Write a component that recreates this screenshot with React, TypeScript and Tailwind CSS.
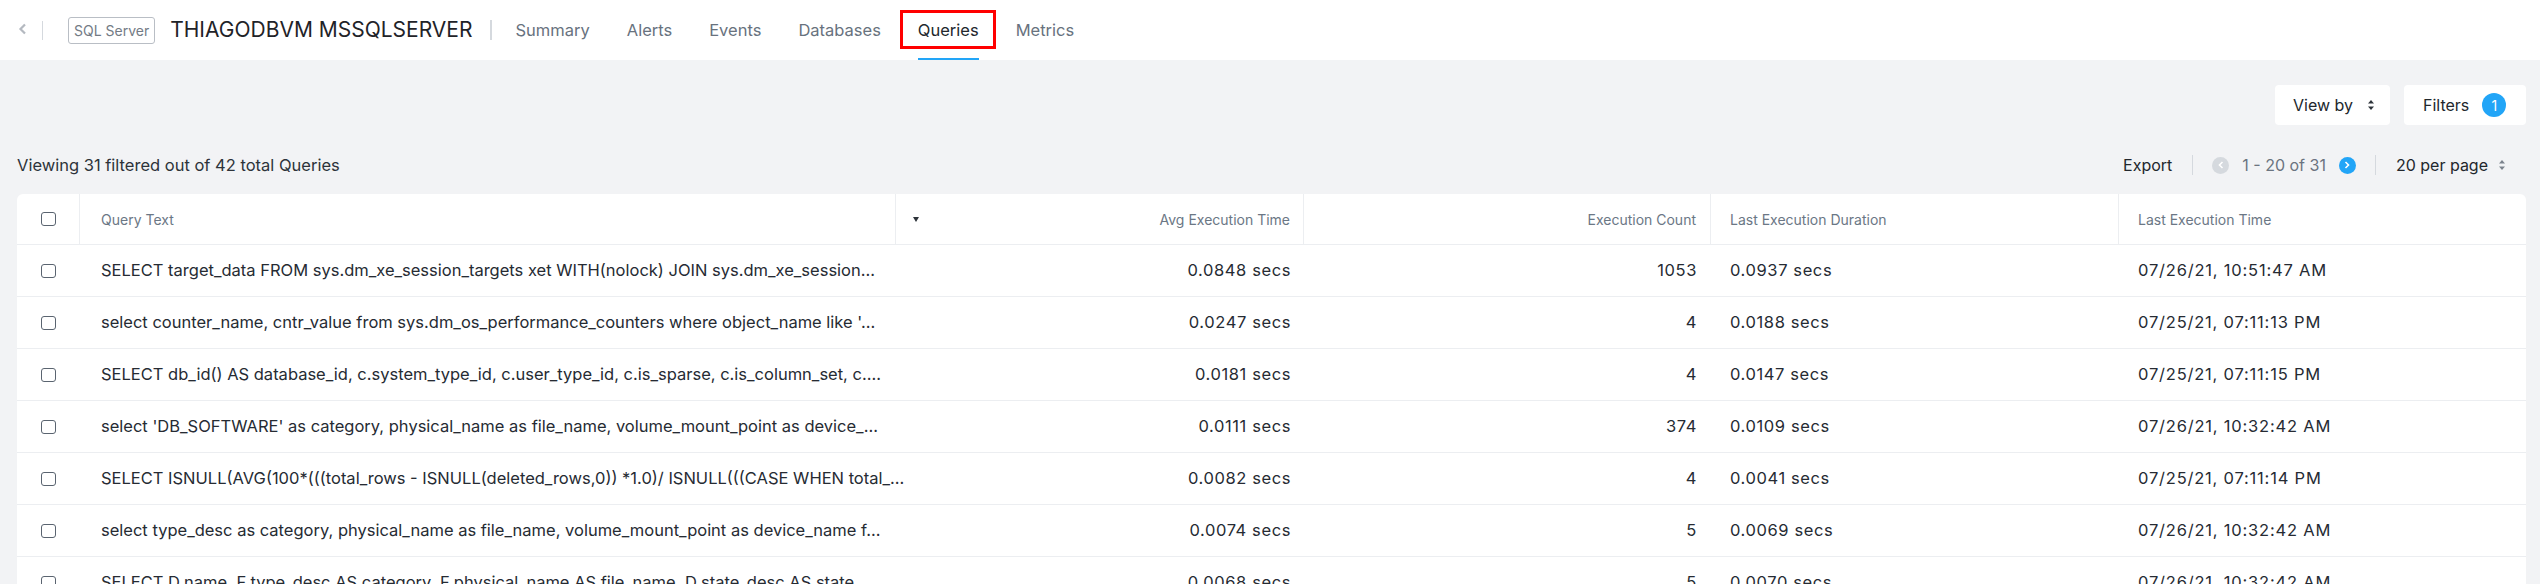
import React from 'react';

type QueryRow = {
  text: string;
  avg: string;
  count: string;
  lastDuration: string;
  lastTime: string;
};

const rows: QueryRow[] = [
  {
    text: 'SELECT target_data FROM sys.dm_xe_session_targets xet WITH(nolock) JOIN sys.dm_xe_session...',
    avg: '0.0848 secs',
    count: '1053',
    lastDuration: '0.0937 secs',
    lastTime: '07/26/21, 10:51:47 AM'
  },
  {
    text: "select counter_name, cntr_value from sys.dm_os_performance_counters where object_name like '...",
    avg: '0.0247 secs',
    count: '4',
    lastDuration: '0.0188 secs',
    lastTime: '07/25/21, 07:11:13 PM'
  },
  {
    text: 'SELECT db_id() AS database_id, c.system_type_id, c.user_type_id, c.is_sparse, c.is_column_set, c....',
    avg: '0.0181 secs',
    count: '4',
    lastDuration: '0.0147 secs',
    lastTime: '07/25/21, 07:11:15 PM'
  },
  {
    text: "select 'DB_SOFTWARE' as category, physical_name as file_name, volume_mount_point as device_...",
    avg: '0.0111 secs',
    count: '374',
    lastDuration: '0.0109 secs',
    lastTime: '07/26/21, 10:32:42 AM'
  },
  {
    text: 'SELECT ISNULL(AVG(100*(((total_rows - ISNULL(deleted_rows,0)) *1.0)/ ISNULL(((CASE WHEN total_...',
    avg: '0.0082 secs',
    count: '4',
    lastDuration: '0.0041 secs',
    lastTime: '07/25/21, 07:11:14 PM'
  },
  {
    text: 'select type_desc as category, physical_name as file_name, volume_mount_point as device_name f...',
    avg: '0.0074 secs',
    count: '5',
    lastDuration: '0.0069 secs',
    lastTime: '07/26/21, 10:32:42 AM'
  },
  {
    text: 'SELECT D.name, F.type_desc AS category, F.physical_name AS file_name, D.state_desc AS state...',
    avg: '0.0068 secs',
    count: '5',
    lastDuration: '0.0070 secs',
    lastTime: '07/26/21, 10:32:42 AM'
  }
];

const tabs = ['Summary', 'Alerts', 'Events', 'Databases', 'Queries', 'Metrics'];

function UpDown({ color = '#2d333a' }: { color?: string }) {
  return (
    <svg width="8" height="12" viewBox="0 0 8 12" fill={color}>
      <path d="M4 1 L7 4.5 H1 Z" />
      <path d="M4 11 L7 7.5 H1 Z" />
    </svg>
  );
}

function Checkbox() {
  return <span className="block w-[15px] h-[14px] rounded-[3px] border border-[#5a6470] bg-white" />;
}

export default function App() {
  return (
    <div className="h-[584px] overflow-hidden bg-[#f2f3f5] font-['Inter',sans-serif] text-[#262b33]">
      {/* Top bar */}
      <header className="h-[60px] bg-white flex items-center pl-[18px]">
        <svg width="9" height="12" viewBox="0 0 9 12" className="mt-[-2px]">
          <path d="M7 1.5 L2.5 6 L7 10.5" fill="none" stroke="#b4b9c0" strokeWidth="2.2" />
        </svg>
        <span className="ml-[15px] w-px h-[19px] bg-[#d5d9de]" />
        <span className="ml-[25px] h-[27px] px-[5px] flex items-center rounded-[3px] border border-[#b9bec5] text-[14px] text-[#737b85]">
          SQL Server
        </span>
        <h1 className="ml-[15px] text-[21px] text-[#1f2328]">THIAGODBVM MSSQLSERVER</h1>
        <span className="ml-[17px] w-[2px] h-[20px] bg-[#d5d9de]" />
        <nav className="ml-[24px] h-full flex items-center gap-[37px]">
          {tabs.map(tab =>
            tab === 'Queries' ? (
              <span key={tab} className="relative h-full flex items-center text-[16.5px] text-[#22272d]">
                Queries
                <span className="absolute left-[-18px] right-[-17px] top-[10px] h-[39px] border-[3px] border-[#ff0000]" />
                <span className="absolute left-0 right-0 bottom-0 h-[2px] bg-[#22a5f7]" />
              </span>
            ) : (
              <span key={tab} className="text-[16.5px] text-[#68727e]">
                {tab}
              </span>
            )
          )}
        </nav>
      </header>

      <main className="pl-[17px] pr-[14px] pt-[25px]">
        <div className="flex justify-end gap-[14px]">
          <button className="h-[40px] w-[115px] pl-[18px] flex items-center gap-[14px] rounded-[4px] bg-white text-[16px] text-[#22272d]">
            View by
            <UpDown />
          </button>
          <button className="h-[40px] w-[122px] pl-[19px] flex items-center gap-[13px] rounded-[4px] bg-white text-[16px] text-[#22272d]">
            Filters
            <span className="w-[24px] h-[24px] rounded-full bg-[#22a5f7] text-white text-[14px] flex items-center justify-center">
              1
            </span>
          </button>
        </div>

        <div className="mt-[20px] h-[40px] flex items-center justify-between">
          <span className="text-[16.5px] text-[#2d333a]">Viewing 31 filtered out of 42 total Queries</span>
          <div className="flex items-center pr-[20px] text-[16px]">
            <span className="text-[#22272d]">Export</span>
            <span className="ml-[20px] w-px h-[20px] bg-[#d5d9de]" />
            <span className="ml-[19px] w-[17px] h-[17px] rounded-full bg-[#d5d9de] flex items-center justify-center">
              <svg width="6" height="8" viewBox="0 0 6 8">
                <path d="M4.5 1 L1.5 4 L4.5 7" fill="none" stroke="#fff" strokeWidth="1.6" />
              </svg>
            </span>
            <span className="ml-[13px] text-[#6b7480]">1 - 20 of 31</span>
            <span className="ml-[13px] w-[17px] h-[17px] rounded-full bg-[#22a5f7] flex items-center justify-center">
              <svg width="6" height="8" viewBox="0 0 6 8">
                <path d="M1.5 1 L4.5 4 L1.5 7" fill="none" stroke="#fff" strokeWidth="1.6" />
              </svg>
            </span>
            <span className="ml-[19px] w-px h-[20px] bg-[#d5d9de]" />
            <span className="ml-[20px] text-[#22272d]">20 per page</span>
            <span className="ml-[10px]">
              <UpDown color="#7b838d" />
            </span>
          </div>
        </div>

        <div className="mt-[9px] bg-white rounded-t-md">
          {/* Column headings */}
          <div className="grid grid-cols-[63px_816px_408px_407px_408px_1fr] h-[51px] border-b border-[#eceef1] text-[14px] text-[#6b7785]">
            <div className="flex items-center justify-center border-r border-[#eceef1]">
              <Checkbox />
            </div>
            <div className="flex items-center pl-[21px] border-r border-[#eceef1]">Query Text</div>
            <div className="flex items-center justify-between pl-[17px] pr-[13px] border-r border-[#eceef1]">
              <svg width="6" height="5" viewBox="0 0 6 5">
                <path d="M0 0 H6 L3 5 Z" fill="#2d333a" />
              </svg>
              <span>Avg Execution Time</span>
            </div>
            <div className="flex items-center justify-end pr-[14px] border-r border-[#eceef1]">Execution Count</div>
            <div className="flex items-center pl-[19px] border-r border-[#eceef1]">Last Execution Duration</div>
            <div className="flex items-center pl-[19px]">Last Execution Time</div>
          </div>

          {rows.map(row => (
            <div
              key={row.text}
              className="grid grid-cols-[63px_816px_408px_407px_408px_1fr] h-[52px] border-b border-[#eceef1] text-[16.5px]"
            >
              <div className="flex items-center justify-center">
                <Checkbox />
              </div>
              <div className="flex items-center pl-[21px] whitespace-nowrap">{row.text}</div>
              <div className="flex items-center justify-end pr-[13px] tracking-[0.6px]">{row.avg}</div>
              <div className="flex items-center justify-end pr-[14px] tracking-[0.6px]">{row.count}</div>
              <div className="flex items-center pl-[19px] tracking-[0.6px]">{row.lastDuration}</div>
              <div className="flex items-center pl-[19px] tracking-[0.8px]">{row.lastTime}</div>
            </div>
          ))}
        </div>
      </main>
    </div>
  );
}
